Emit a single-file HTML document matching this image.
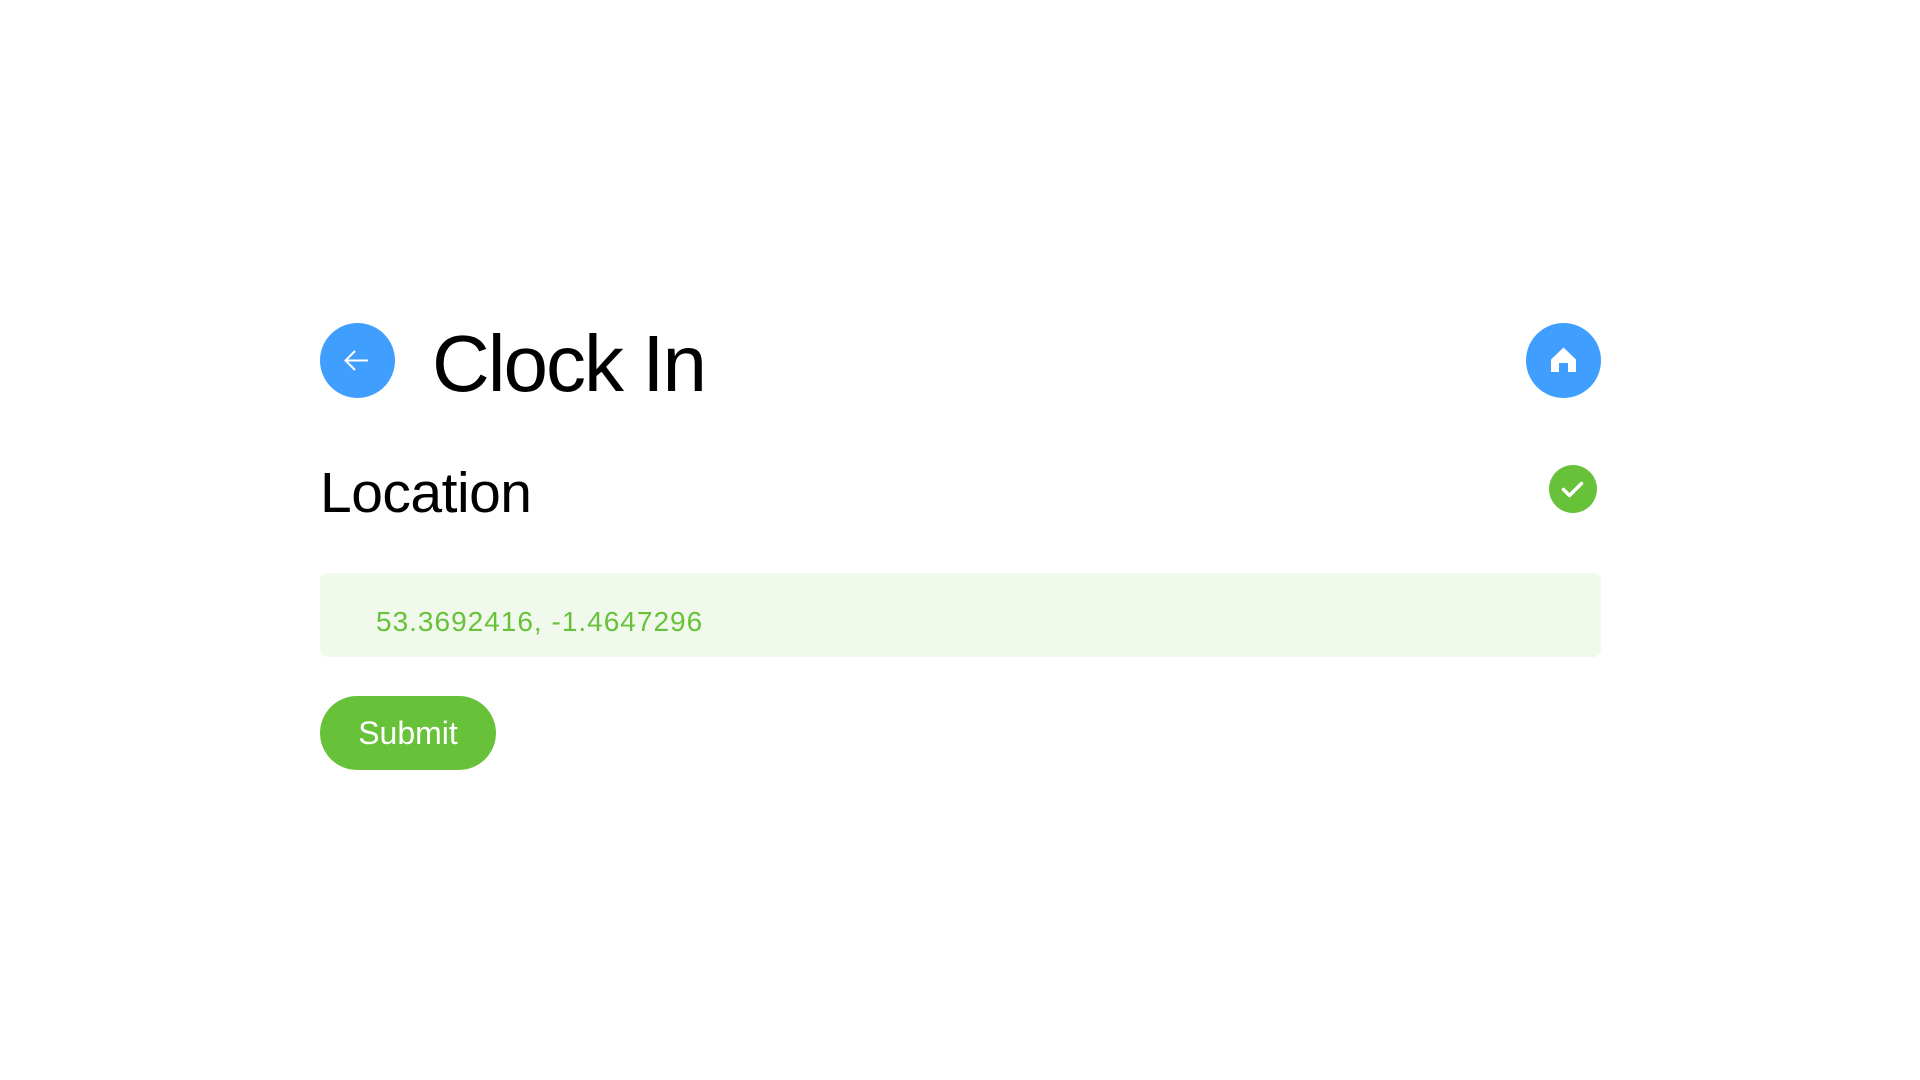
<!DOCTYPE html>
<html><head><style>
body{margin:0;width:1920px;height:1080px;background:#fff;font-family:"Liberation Sans",sans-serif;position:relative;overflow:hidden}
.a{position:absolute}
.circ{border-radius:50%;background:#409eff}
</style></head><body>
<div class="a circ" style="left:320px;top:323px;width:75px;height:75px">
<svg width="75" height="75" viewBox="0 0 75 75"><path d="M48 37.5H26M35 28l-9.5 9.5L35 47" fill="none" stroke="#fff" stroke-width="2"/></svg></div>
<div class="a" style="left:432px;top:309px;font-size:80px;line-height:110px;letter-spacing:-2px;color:#000">Clock In</div>
<div class="a circ" style="left:1526px;top:323px;width:75px;height:75px">
<svg width="75" height="75" viewBox="0 0 75 75"><path d="M25 36.5L37.5 24.5L50 36.5V49H42V40H33V49H25Z" fill="#fff"/></svg></div>
<div class="a" style="left:320px;top:453px;font-size:57px;line-height:80px;letter-spacing:-0.5px;color:#000">Location</div>
<div class="a" style="left:1549px;top:465px;width:48px;height:48px;border-radius:50%;background:#67c23a">
<svg width="48" height="48" viewBox="0 0 48 48"><path d="M14.5 24.5l6 6 12-12" fill="none" stroke="#fff" stroke-width="3.5" stroke-linecap="round" stroke-linejoin="round"/></svg></div>
<div class="a" style="left:320px;top:573px;width:1281px;height:84px;border-radius:8px;background:#f0f9eb"></div>
<div class="a" style="left:376px;top:602px;font-size:28px;line-height:40px;letter-spacing:1px;color:#67c23a">53.3692416, -1.4647296</div>
<div class="a" style="left:320px;top:696px;width:176px;height:74px;border-radius:37px;background:#67c23a;color:#fff;font-size:32px;line-height:74px;text-align:center">Submit</div>
</body></html>
